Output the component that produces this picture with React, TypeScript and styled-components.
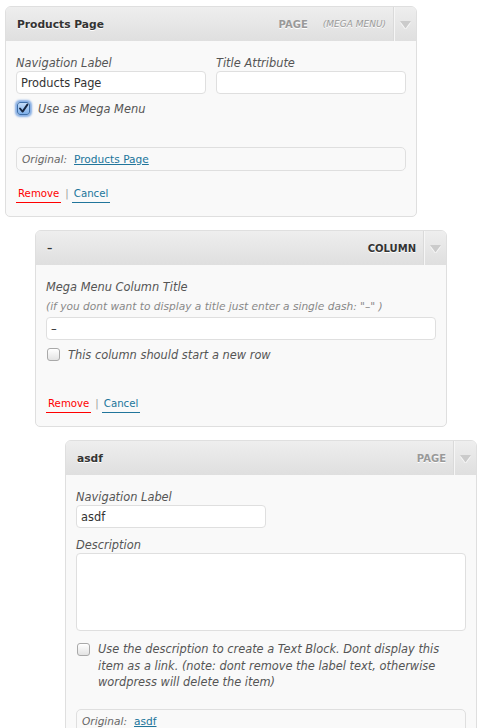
import React from "react";
import styled, { createGlobalStyle } from "styled-components";

const Global = createGlobalStyle`
  html, body { margin: 0; padding: 0; background: #fff; }
  body { font-family: "DejaVu Sans", "Liberation Sans", sans-serif; color: #333; }
  * { box-sizing: border-box; }
`;

const Page = styled.div`
  display: flex;
  flex-direction: column;
  gap: 13px;
  padding-top: 6px;
  width: 493px;
  height: 728px;
  overflow: hidden;
`;

const Panel = styled.section<{ $indent: number }>`
  flex-shrink: 0;
  margin-left: ${(p) => p.$indent}px;
  width: 412px;
  border: 1px solid #dfdfdf;
  border-radius: 6px 6px 5px 5px;
  background: #f9f9f9;
  overflow: hidden;
`;

const Header = styled.header`
  display: flex;
  align-items: center;
  height: 34px;
  background: linear-gradient(#eeeeee, #dfdfdf);
`;

const Title = styled.span`
  flex: 1;
  padding-left: 11px;
  font-weight: bold;
  font-size: 10.7px;
  color: #333;
  text-shadow: 0 1px 0 #fff;
`;

const TypeLabel = styled.span<{ $dark?: boolean }>`
  font-weight: bold;
  font-size: 10px;
  color: ${(p) => (p.$dark ? "#333" : "#999")};
  text-shadow: 0 1px 0 #fff;
  text-transform: uppercase;
`;

const TypeNote = styled.span`
  margin-left: 15px;
  font-style: italic;
  font-size: 9px;
  color: #999;
  text-shadow: 0 1px 0 #fff;
`;

const Toggle = styled.div`
  align-self: stretch;
  width: 22px;
  margin-left: 8px;
  border-left: 1px solid #f6f6f6;
  box-shadow: -1px 0 0 #dadada;
  display: flex;
  align-items: center;
  justify-content: center;
  padding-top: 2px;
`;

const Body = styled.div`
  display: flex;
  flex-direction: column;
  padding: 15px 10px 13px;
`;

const Row = styled.div`
  display: flex;
  gap: 10px;
`;

const Field = styled.div`
  display: flex;
  flex-direction: column;
  flex: 1;
`;

const Label = styled.label<{ $mt?: number }>`
  display: block;
  margin-top: ${(p) => p.$mt ?? 0}px;
  font-style: italic;
  font-size: 11.4px;
  line-height: 15px;
  color: #555;
`;

const Hint = styled.div`
  margin-top: 5px;
  font-style: italic;
  font-size: 10.6px;
  line-height: 13px;
  color: #888;
`;

const TextInput = styled.input<{ $w?: number; $mt?: number }>`
  display: block;
  width: ${(p) => (p.$w ? `${p.$w}px` : "100%")};
  height: 23px;
  margin: ${(p) => p.$mt ?? 0}px 0 0;
  padding: 0 4px;
  border: 1px solid #dfdfdf;
  border-radius: 4px;
  background: #fff;
  font-family: "DejaVu Sans", sans-serif;
  font-size: 11.4px;
  color: #333;
  outline: none;
`;

const TextArea = styled.textarea`
  display: block;
  width: 100%;
  height: 78px;
  margin: 0;
  border: 1px solid #dfdfdf;
  border-radius: 4px;
  background: #fff;
  resize: none;
  outline: none;
`;

const CheckRow = styled.div<{ $mt: number }>`
  display: flex;
  align-items: flex-start;
  margin-top: ${(p) => p.$mt}px;
`;

const Box = styled.span<{ $checked?: boolean; $top: number }>`
  flex-shrink: 0;
  display: flex;
  align-items: center;
  justify-content: center;
  width: 13px;
  height: 13px;
  margin: ${(p) => p.$top}px 8px 0 1px;
  border-radius: 3px;
  border: 1px solid ${(p) => (p.$checked ? "#3f6fa8" : "#a9a9a9")};
  background: ${(p) =>
    p.$checked
      ? "linear-gradient(#c4dcf7, #7fb0ea)"
      : "linear-gradient(#ffffff, #e3e3e3)"};
  box-shadow: ${(p) =>
    p.$checked ? "0 0 2px 2px rgba(96, 150, 222, 0.75)" : "inset 0 1px 0 #fff"};
`;

const CheckText = styled.span<{ $lh: number }>`
  font-style: italic;
  font-size: 11.4px;
  line-height: ${(p) => p.$lh}px;
  color: #555;
`;

const Original = styled.div<{ $mt: number }>`
  display: flex;
  align-items: center;
  gap: 7px;
  height: 24px;
  margin-top: ${(p) => p.$mt}px;
  padding: 0 5px;
  border: 1px solid #dfdfdf;
  border-radius: 5px;
  font-size: 10.6px;
`;

const OrigLabel = styled.span`
  font-style: italic;
  color: #666;
`;

const OrigLink = styled.a`
  color: #21759b;
  text-decoration: underline;
`;

const Actions = styled.div<{ $mt: number }>`
  display: flex;
  align-items: flex-start;
  margin-top: ${(p) => p.$mt}px;
  font-size: 10.2px;
  line-height: 14px;
`;

const ActionLink = styled.a<{ $danger?: boolean }>`
  display: inline-block;
  padding: 0 2px 1px;
  color: ${(p) => (p.$danger ? "#f00" : "#21759b")};
  border-bottom: 1px solid ${(p) => (p.$danger ? "#f00" : "#21759b")};
  text-decoration: none;
`;

const Sep = styled.span`
  margin: 0 3px 0 4px;
  color: #999;
`;

const Arrow = () => (
  <svg width="11" height="8" viewBox="0 0 11 8">
    <polygon points="0,0.5 11,0.5 5.5,8" fill="#fff" opacity="0.7" transform="translate(0,1)" />
    <polygon points="0,0 11,0 5.5,7.5" fill="#cbcbcb" />
  </svg>
);

const Check = () => (
  <svg width="11" height="11" viewBox="0 0 11 11">
    <path d="M2 5.5 L4.6 8.6 L9.4 1.6" fill="none" stroke="#17263f" strokeWidth="1.9" strokeLinecap="round" strokeLinejoin="round" />
  </svg>
);

type HeadProps = { title: string; type: string; note?: string; dark?: boolean };

const PanelHead = ({ title, type, note, dark }: HeadProps) => (
  <Header>
    <Title>{title}</Title>
    <TypeLabel $dark={dark}>{type}</TypeLabel>
    {note && <TypeNote>{note}</TypeNote>}
    <Toggle>
      <Arrow />
    </Toggle>
  </Header>
);

const LinkActions = ({ mt }: { mt: number }) => (
  <Actions $mt={mt}>
    <ActionLink $danger href="#">Remove</ActionLink>
    <Sep>|</Sep>
    <ActionLink href="#">Cancel</ActionLink>
  </Actions>
);

export default function App() {
  return (
    <>
      <Global />
      <Page>
        <Panel $indent={5}>
          <PanelHead title="Products Page" type="Page" note="(MEGA MENU)" />
          <Body>
            <Row>
              <Field>
                <Label>Navigation Label</Label>
                <TextInput defaultValue="Products Page" readOnly />
              </Field>
              <Field>
                <Label>Title Attribute</Label>
                <TextInput defaultValue="" readOnly />
              </Field>
            </Row>
            <CheckRow $mt={7}>
              <Box $checked $top={1}>
                <Check />
              </Box>
              <CheckText $lh={16}>Use as Mega Menu</CheckText>
            </CheckRow>
            <Original $mt={30}>
              <OrigLabel>Original:</OrigLabel>
              <OrigLink href="#">Products Page</OrigLink>
            </Original>
            <LinkActions mt={16} />
          </Body>
        </Panel>

        <Panel $indent={35}>
          <PanelHead title="–" type="Column" dark />
          <Body>
            <Label>Mega Menu Column Title</Label>
            <Hint>(if you dont want to display a title just enter a single dash: "–" )</Hint>
            <TextInput defaultValue="–" readOnly $mt={4} />
            <CheckRow $mt={7}>
              <Box $top={1} />
              <CheckText $lh={16}>This column should start a new row</CheckText>
            </CheckRow>
            <LinkActions mt={34} />
          </Body>
        </Panel>

        <Panel $indent={65}>
          <PanelHead title="asdf" type="Page" />
          <Body>
            <Label>Navigation Label</Label>
            <TextInput defaultValue="asdf" readOnly $w={190} $mt={0} />
            <Label $mt={10}>Description</Label>
            <TextArea readOnly />
            <CheckRow $mt={10}>
              <Box $top={2} />
              <CheckText $lh={16.5}>
                Use the description to create a Text Block. Dont display this item as a link. (note:
                dont remove the label text, otherwise wordpress will delete the item)
              </CheckText>
            </CheckRow>
            <Original $mt={18}>
              <OrigLabel>Original:</OrigLabel>
              <OrigLink href="#">asdf</OrigLink>
            </Original>
          </Body>
        </Panel>
      </Page>
    </>
  );
}
